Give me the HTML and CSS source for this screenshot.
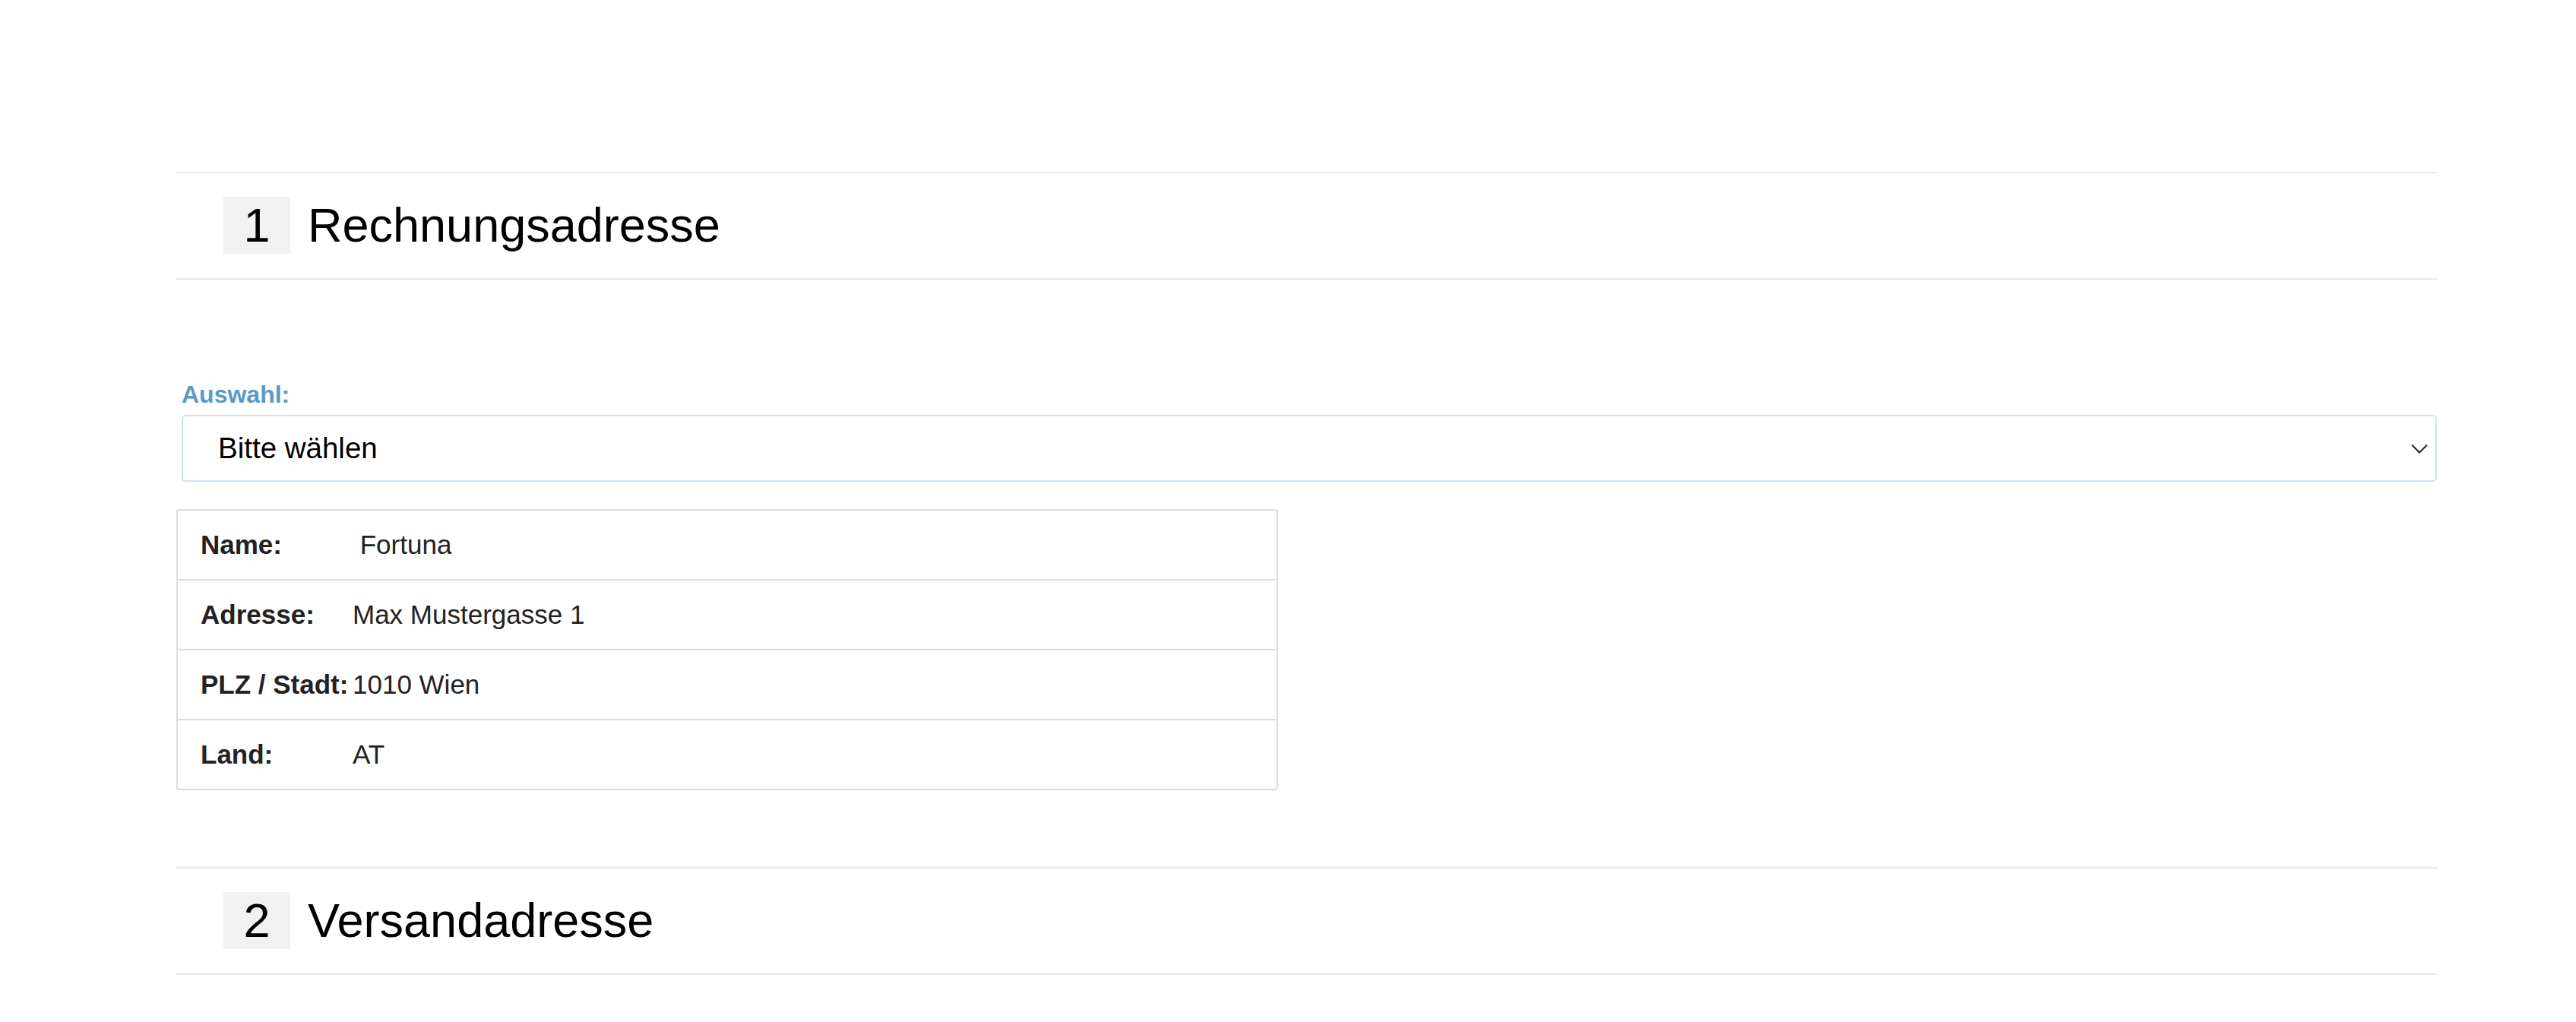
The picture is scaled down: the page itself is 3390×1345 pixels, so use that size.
FILE: index.html
```html
<!DOCTYPE html>
<html lang="de">
<head>
<meta charset="utf-8">
<title>Rechnungsadresse</title>
<link rel="stylesheet" href="styles.css">
</head>
<body>
<main class="page">
  <section class="step">
    <div class="step-num">1</div>
    <h2 class="step-title">Rechnungsadresse</h2>
  </section>

  <div class="form-group">
    <label class="field-label">Auswahl:</label>
    <div class="select">
      <span class="select-value">Bitte wählen</span>
      <svg class="chevron" width="22" height="13" viewBox="0 0 22 13" aria-hidden="true">
        <polyline points="1,1.5 11,11.5 21,1.5" fill="none" stroke="#222" stroke-width="2"/>
      </svg>
    </div>
  </div>

  <div class="address-card">
    <div class="row"><span class="key">Name:</span><span class="val">&nbsp;Fortuna</span></div>
    <div class="row"><span class="key">Adresse:</span><span class="val">Max Mustergasse 1</span></div>
    <div class="row"><span class="key">PLZ / Stadt:</span><span class="val">1010 Wien</span></div>
    <div class="row"><span class="key">Land:</span><span class="val">AT</span></div>
  </div>

  <section class="step step-second">
    <div class="step-num">2</div>
    <h2 class="step-title">Versandadresse</h2>
  </section>
</main>
</body>
</html>
```

FILE: styles.css
```css
html, body {
  margin: 0;
  padding: 0;
  background: #fff;
}

body {
  font-family: "Liberation Sans", Arial, sans-serif;
  color: #000;
}

.page {
  margin-left: 232px;
  width: 2975px;
  padding-top: 226px;
}

.step {
  display: flex;
  align-items: center;
  gap: 23px;
  border-top: 2px solid #e9e9e9;
  border-bottom: 2px solid #e9e9e9;
  padding: 31px 0 32px 62px;
}

.step-second {
  margin-top: 101px;
}

.step-num {
  width: 88px;
  height: 75px;
  background: #f1f1f1;
  display: flex;
  align-items: center;
  justify-content: center;
  font-size: 63px;
  line-height: 75px;
  color: #000;
}

.step-title {
  margin: 0;
  font-size: 63px;
  font-weight: normal;
  line-height: 75px;
  color: #000;
}

.form-group {
  margin-top: 133px;
  margin-left: 7px;
}

.field-label {
  display: block;
  font-size: 32px;
  font-weight: bold;
  line-height: 36px;
  color: #5a99c6;
  margin: 0 0 9px 0;
}

.select {
  box-sizing: border-box;
  height: 88px;
  border: 2px solid #cfe2ef;
  border-radius: 5px;
  display: flex;
  align-items: center;
  justify-content: space-between;
  padding: 0 10px 0 46px;
  font-size: 38.5px;
  color: #000;
}

.chevron {
  display: block;
}

.address-card {
  margin-top: 36px;
  width: 1450px;
  box-sizing: border-box;
  border: 2px solid #dddddd;
  border-radius: 4px;
  color: #222;
  font-size: 35px;
}

.row {
  display: grid;
  grid-template-columns: 200px 1fr;
  align-items: center;
  height: 90px;
  padding-left: 30px;
}

.row + .row {
  border-top: 2px solid #dddddd;
}

.key {
  font-weight: bold;
}
```
